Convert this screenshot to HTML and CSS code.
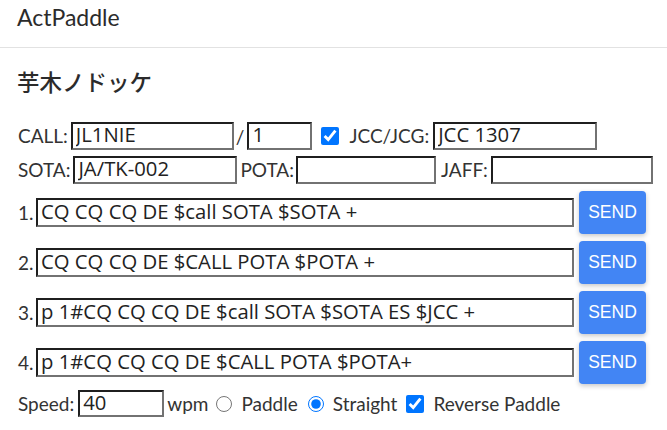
FILE: index.html
```html
<!DOCTYPE html>
<html lang="ja">
<head>
<meta charset="utf-8">
<title>ActPaddle</title>
<link rel="stylesheet" href="styles.css">
</head>
<body>
<header class="topbar">ActPaddle</header>
<main class="main">
  <h2 class="title">芋木ノドッケ</h2>
  <div class="row">
    <span class="lbl">CALL:</span>
    <input class="fld w-call" type="text" value="JL1NIE">
    <span class="slash">/</span>
    <input class="fld w-suffix" type="text" value="1">
    <input class="chk chk-jcc" type="checkbox" checked>
    <span class="lbl">JCC/JCG:</span>
    <input class="fld w-jcc" type="text" value="JCC 1307">
  </div>
  <div class="row">
    <span class="lbl">SOTA:</span>
    <input class="fld w-sota" type="text" value="JA/TK-002">
    <span class="lbl lbl-pota">POTA:</span>
    <input class="fld w-pota" type="text" value="">
    <span class="lbl lbl-jaff">JAFF:</span>
    <input class="fld w-jaff" type="text" value="">
  </div>
  <div class="msgs">
    <div class="msg">
      <span class="num">1.</span>
      <input class="fld msg-fld" type="text" value="CQ CQ CQ DE $call SOTA $SOTA +">
      <button class="send">SEND</button>
    </div>
    <div class="msg">
      <span class="num">2.</span>
      <input class="fld msg-fld" type="text" value="CQ CQ CQ DE $CALL POTA $POTA +">
      <button class="send">SEND</button>
    </div>
    <div class="msg">
      <span class="num">3.</span>
      <input class="fld msg-fld" type="text" value="p 1#CQ CQ CQ DE $call SOTA $SOTA ES $JCC +">
      <button class="send">SEND</button>
    </div>
    <div class="msg">
      <span class="num">4.</span>
      <input class="fld msg-fld" type="text" value="p 1#CQ CQ CQ DE $CALL POTA $POTA+">
      <button class="send">SEND</button>
    </div>
  </div>
  <div class="row speed-row">
    <span class="lbl">Speed:</span>
    <input class="fld w-speed" type="text" value="40">
    <span class="lbl wpm">wpm</span>
    <input class="rad rad-1" type="radio" name="mode">
    <span class="lbl">Paddle</span>
    <input class="rad rad-2" type="radio" name="mode" checked>
    <span class="lbl">Straight</span>
    <input class="chk chk-rev" type="checkbox" checked>
    <span class="lbl">Reverse Paddle</span>
  </div>
</main>
</body>
</html>
```
FILE: styles.css
```css
html, body {
  margin: 0;
  padding: 0;
  background: #ffffff;
}
body {
  font-family: Lato, "Noto Sans CJK JP", sans-serif;
  color: #333333;
  font-size: 19px;
}
.topbar {
  height: 47px;
  line-height: 35px;
  padding: 0 17px;
  font-size: 23px;
  color: #2b2b2b;
  border-bottom: 1px solid #e2e2e2;
}
.main {
  padding: 0 18px;
}
.title {
  margin: 19px 0 27px -1px;
  font-family: "Noto Sans CJK JP", sans-serif;
  font-size: 22.5px;
  line-height: 28px;
  font-weight: 500;
  color: #2b2b2b;
}
.row {
  display: flex;
  align-items: center;
  height: 28px;
  margin-bottom: 6px;
}
.lbl {
  white-space: nowrap;
  line-height: 22px;
}
.fld {
  box-sizing: border-box;
  height: 28px;
  margin: 0;
  padding: 0 3px 4px 3px;
  border-width: 2px;
  border-style: solid;
  border-color: #1f1f1f #727272 #727272 #1f1f1f;
  background: #fff;
  font-family: "Open Sans", "Noto Sans", sans-serif;
  font-size: 20.3px;
  color: #222;
  outline: none;
}
.w-call { width: 163px; margin-left: 3px; }
.slash { margin: 0 3px 0 2px; }
.w-suffix { width: 65px; }
.chk {
  width: 18px;
  height: 18px;
  margin: 0;
  accent-color: #0075ff;
}
.chk-jcc { margin: 0 10px 0 9px; }
.w-jcc { width: 164px; margin-left: 4px; }
.w-sota { width: 164px; margin-left: 3px; }
.lbl-pota { margin-left: 3px; }
.lbl-jaff { margin-left: 5px; }
.w-pota { width: 140px; margin-left: 2px; }
.w-jaff { width: 162px; margin-left: 3px; }
.msgs {
  margin-top: 7px;
  display: flex;
  flex-direction: column;
  gap: 7px;
}
.msg {
  display: flex;
  align-items: center;
  height: 43px;
}
.num {
  width: 18px;
  line-height: 22px;
}
.msg-fld {
  width: 538px;
  height: 29px;
}
.send {
  margin-left: 5px;
  width: 67px;
  height: 43px;
  border: none;
  border-radius: 4px;
  background: #4285f4;
  color: #fff;
  font-family: "Liberation Sans", Arial, sans-serif;
  font-size: 17.5px;
  box-shadow: 0 2px 5px rgba(0,0,0,0.22);
  padding: 0;
}
.speed-row {
  margin-top: 6px;
  height: 27px;
}
.w-speed { width: 86px; height: 27px; margin-left: 4px; }
.wpm { margin-left: 3px; }
.rad {
  width: 16px;
  height: 16px;
  margin: 0 9px 0 8px;
  accent-color: #0075ff;
}
.rad-2 { margin: 0 9px 0 10px; }
.chk-rev { margin: 0 9px 0 9px; }
```
